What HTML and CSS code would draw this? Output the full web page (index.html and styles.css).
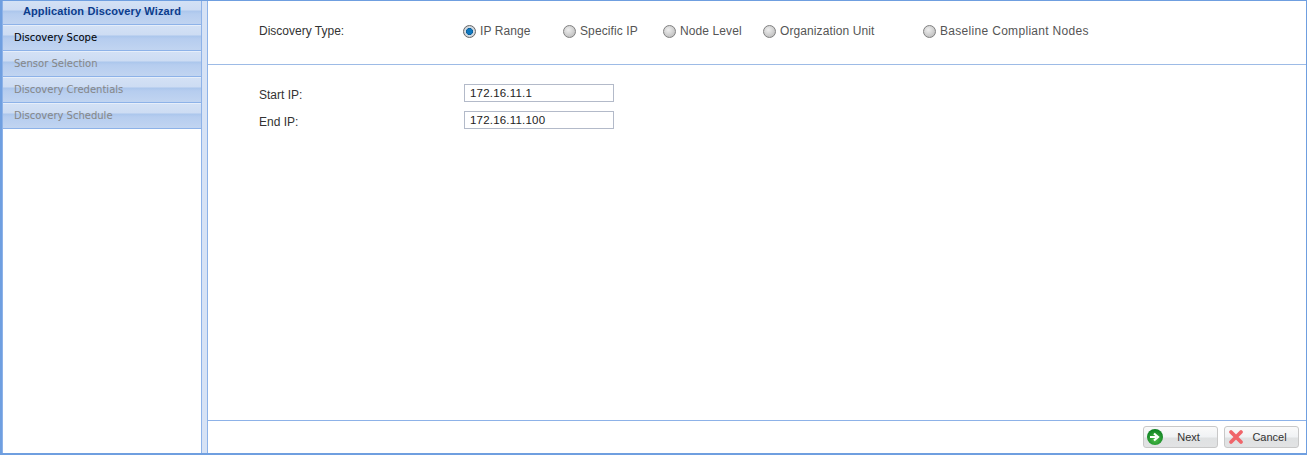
FILE: index.html
```html
<!DOCTYPE html>
<html lang="en">
<head>
<meta charset="utf-8">
<title>Application Discovery Wizard</title>
<link rel="stylesheet" href="styles.css">
</head>
<body>
<div class="window">
  <aside class="sidebar">
    <div class="step title">Application Discovery Wizard</div>
    <div class="step active">Discovery Scope</div>
    <div class="step">Sensor Selection</div>
    <div class="step">Discovery Credentials</div>
    <div class="step">Discovery Schedule</div>
  </aside>
  <div class="splitter"></div>
  <main class="main">
    <section class="type-row">
      <span class="label">Discovery Type:</span>
      <div class="radios">
        <label class="radio r1"><span class="dot on"></span>IP Range</label>
        <label class="radio r1"><span class="dot"></span>Specific IP</label>
        <label class="radio r1"><span class="dot"></span>Node Level</label>
        <label class="radio r2"><span class="dot"></span>Organization Unit</label>
        <label class="radio r3"><span class="dot"></span>Baseline Compliant Nodes</label>
      </div>
    </section>
    <section class="fields">
      <div class="field"><span class="label">Start IP:</span><div class="input">172.16.11.1</div></div>
      <div class="field"><span class="label">End IP:</span><div class="input">172.16.11.100</div></div>
    </section>
    <footer class="footer">
      <button class="btn" type="button">
        <svg class="ico" width="18" height="18" viewBox="0 0 18 18"><defs><radialGradient id="g" cx="50%" cy="65%" r="65%"><stop offset="0" stop-color="#4fc04a"/><stop offset="1" stop-color="#0a7d20"/></radialGradient></defs><circle cx="9" cy="9" r="8" fill="url(#g)"/><path d="M4 9h6M8 5.5l4 3.5-4 3.5" fill="none" stroke="#fff" stroke-width="2.2"/></svg>
        <span>Next</span>
      </button>
      <button class="btn" type="button">
        <svg class="ico" width="18" height="18" viewBox="0 0 18 18"><path d="M4 4l10 10M14 4L4 14" fill="none" stroke="#f0656a" stroke-width="3.8" stroke-linecap="round"/></svg>
        <span>Cancel</span>
      </button>
    </footer>
  </main>
</div>
</body>
</html>
```
FILE: styles.css
```css
* { box-sizing: border-box; }
html, body { margin: 0; height: 100%; }
body { font-family: "Liberation Sans", Arial, sans-serif; font-size: 12px; color: #333; background: #fff; }
.window { display: flex; width: 1307px; height: 455px; border: 1px solid #6f9fe0; border-left-width: 2px; border-bottom-width: 2px; }
.sidebar { width: 200px; flex: none; border-left: 1px solid #8db2e8; border-right: 1px solid #8db2e8; }
.step { height: 26px; padding: 5px 0 0 11px; font-family: "DejaVu Sans", sans-serif; font-size: 10px; line-height: 13px; color: #868686; border-top: 1px solid #e6eefa; border-bottom: 1px solid #8db2e8;
  background: linear-gradient(#d3e1f5 0, #cddcf3 9px, #abc6ec 10px, #b6cdef 13px, #c2d5f1 25px); }
.step.active { color: #000; }
.step.title { height: 24px; padding: 3px 0 0; border-top: 0; text-align: center; font-family: "Liberation Sans", Arial, sans-serif; font-size: 11px; line-height: 14px; font-weight: bold; letter-spacing: .13px; color: #0b3c8c; }
.splitter { width: 6px; flex: none; background: #d6e2f5; border-right: 1px solid #8db2e8; }
.main { flex: 1; min-width: 0; display: flex; flex-direction: column; }
.type-row { height: 64px; display: flex; padding: 23px 0 0 51px; border-bottom: 1px solid #9dbbe6; }
.type-row .label { width: 204px; }
.label { display: block; width: 205px; flex: none; line-height: 14px; }
.radios { display: flex; flex: none; }
.radio { display: flex; flex: none; align-items: center; height: 14px; width: 100px; white-space: nowrap; letter-spacing: .1px; color: #555; }
.radio.r2 { width: 160px; }
.radio.r3 { width: 180px; letter-spacing: .31px; }
.dot { width: 13px; height: 13px; flex: none; border-radius: 50%; margin-right: 4px; border: 1px solid #808080; background: radial-gradient(circle at 40% 35%, #eeeeee, #b4b4b4); }
.dot.on { background: radial-gradient(circle, #0f78c0 0 2.6px, #0a5a94 3.2px, #d5dde5 3.8px, #c0c4c8 100%); border-color: #666; }
.fields { flex: 1; padding: 19px 0 0 51px; display: flex; flex-direction: column; gap: 9px; }
.field { display: flex; align-items: flex-start; height: 18px; }
.field .label { margin-top: 4px; }
.input { width: 150px; height: 18px; border: 1px solid #b3bac9; padding-left: 5px; line-height: 16px; font-size: 11.5px; letter-spacing: .2px; color: #222; }
.footer { height: 33px; flex: none; border-top: 1px solid #8db2e8; display: flex; justify-content: flex-end; gap: 6px; padding: 5px 7px 0 0; }
.btn { width: 75px; height: 22px; padding: 0 0 0 2px; display: flex; align-items: center; border: 1px solid #c8c8c8; border-radius: 3px; font: 11px "Liberation Sans", Arial, sans-serif; color: #333; background: linear-gradient(#fafafa 0, #f0f2f4 10px, #dfe1e2 11px, #e2e3e4 100%); }
.btn span { flex: 1; text-align: center; padding-right: 4px; }
.ico { flex: none; }
```
